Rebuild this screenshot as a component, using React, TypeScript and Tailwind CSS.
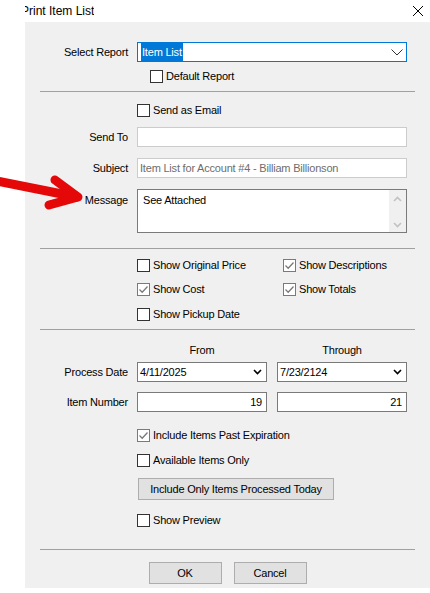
import React from "react";

const font = { fontFamily: '"Liberation Sans", Arial, sans-serif', letterSpacing: "-0.2px" };

function Check({ checked = false }: { checked?: boolean }) {
  return (
    <span
      className={`flex h-[13px] w-[13px] shrink-0 items-center justify-center border bg-white ${
        checked ? "border-[#7a7a7a]" : "border-[#333333]"
      }`}
    >
      {checked && (
        <svg width="11" height="11" viewBox="0 0 11 11">
          <path d="M1.5 5.5 L4.2 8.2 L9.5 2.5" fill="none" stroke="#7a7a7a" strokeWidth="1.3" />
        </svg>
      )}
    </span>
  );
}

function CheckRow({ label, checked }: { label: string; checked?: boolean }) {
  return (
    <div className="flex h-[13px] items-center gap-[3px]">
      <Check checked={checked} />
      <span className="leading-[13px]">{label}</span>
    </div>
  );
}

function Label({ children }: { children: React.ReactNode }) {
  return <div className="w-[88px] shrink-0 text-right">{children}</div>;
}

function Row({
  label,
  children,
  className = "",
}: {
  label?: string;
  children: React.ReactNode;
  className?: string;
}) {
  return (
    <div className={`flex items-center gap-[9px] ${className}`}>
      <Label>{label}</Label>
      <div className="w-[270px] shrink-0">{children}</div>
    </div>
  );
}

function Separator({ className = "" }: { className?: string }) {
  return <div className={`h-px bg-[#a0a0a0] ${className}`} />;
}

function SmallChevron() {
  return (
    <svg width="9" height="6" viewBox="0 0 9 6">
      <path d="M1 1 L4.5 4.5 L8 1" fill="none" stroke="#000" strokeWidth="1.6" />
    </svg>
  );
}

function DateBox({ value }: { value: string }) {
  return (
    <div className="flex h-[20px] w-[130px] items-center justify-between border border-[#7a7a7a] bg-white pl-[2px] pr-[4px]">
      <span>{value}</span>
      <SmallChevron />
    </div>
  );
}

function NumberBox({ value }: { value: string }) {
  return (
    <div className="flex h-[20px] w-[130px] items-center justify-end border border-[#7a7a7a] bg-white pr-[4px]">
      {value}
    </div>
  );
}

function ScrollArrow({ up }: { up?: boolean }) {
  return (
    <svg width="9" height="6" viewBox="0 0 9 6">
      <path
        d={up ? "M1 5 L4.5 1.5 L8 5" : "M1 1 L4.5 4.5 L8 1"}
        fill="none"
        stroke="#c2c2c2"
        strokeWidth="1.6"
      />
    </svg>
  );
}

export default function App() {
  return (
    <div className="relative h-[593px] w-[430px] overflow-hidden bg-white text-[11px] text-black" style={font}>
      {/* title bar */}
      <div className="flex h-[22px] items-center justify-between">
        <div className="ml-[25px] overflow-hidden">
          <span className="-ml-[4px] block whitespace-nowrap text-[12px] tracking-normal">Print Item List</span>
        </div>
        <svg width="12" height="12" viewBox="0 0 12 12" className="mr-[6px]">
          <path d="M1 1 L11 11 M11 1 L1 11" stroke="#000" strokeWidth="1" />
        </svg>
      </div>

      {/* dialog body */}
      <div className="ml-[25px] h-[566px] bg-[#f0f0f0] px-[15px] pt-[20px]">
        <Row label="Select Report">
          <div className="flex h-[20px] items-center justify-between border border-[#0078d7] bg-white pl-[3px] pr-[3px]">
            <span className="flex h-[18px] items-center bg-[#0078d7] px-px text-white">Item List</span>
            <svg width="12" height="7" viewBox="0 0 12 7">
              <path d="M0.5 0.5 L6 6 L11.5 0.5" fill="none" stroke="#333" strokeWidth="1" />
            </svg>
          </div>
        </Row>
        <Row className="mt-[8px]">
          <div className="pl-[13px]">
            <CheckRow label="Default Report" />
          </div>
        </Row>

        <Separator className="mt-[8px]" />

        <Row className="mt-[12px]">
          <CheckRow label="Send as Email" />
        </Row>
        <Row label="Send To" className="mt-[10px]">
          <div className="h-[20px] border border-[#cccccc] bg-white" />
        </Row>
        <Row label="Subject" className="mt-[11px]">
          <div className="flex h-[20px] items-center border border-[#cccccc] bg-white pl-[2px] text-[#6d6d6d]">
            Item List for Account #4 - Billiam Billionson
          </div>
        </Row>
        <div className="mt-[11px] flex gap-[9px]">
          <div className="w-[88px] shrink-0 pt-[3px] text-right">Message</div>
          <div className="flex h-[44px] w-[270px] shrink-0 border border-[#7a7a7a] bg-white">
            <div className="flex-1 pl-[5px] pt-[2px]">See Attached</div>
            <div className="flex w-[17px] flex-col items-center justify-between bg-[#f0f0f0] pb-[4px] pt-[6px]">
              <ScrollArrow up />
              <ScrollArrow />
            </div>
          </div>
        </div>

        <Separator className="mt-[15px]" />

        <Row className="mt-[10px]">
          <div className="grid grid-cols-[146px_1fr] gap-y-[11px]">
            <CheckRow label="Show Original Price" />
            <CheckRow label="Show Descriptions" checked />
            <CheckRow label="Show Cost" checked />
            <CheckRow label="Show Totals" checked />
            <div className="mt-px">
              <CheckRow label="Show Pickup Date" />
            </div>
          </div>
        </Row>

        <Separator className="mt-[8px]" />

        <Row className="mt-[14px]">
          <div className="flex gap-[10px] leading-[13px]">
            <div className="w-[130px] text-center">From</div>
            <div className="w-[130px] text-center">Through</div>
          </div>
        </Row>
        <Row label="Process Date" className="mt-[5px]">
          <div className="flex gap-[10px]">
            <DateBox value="4/11/2025" />
            <DateBox value="7/23/2124" />
          </div>
        </Row>
        <Row label="Item Number" className="mt-[10px]">
          <div className="flex gap-[10px]">
            <NumberBox value="19" />
            <NumberBox value="21" />
          </div>
        </Row>
        <Row className="mt-[17px]">
          <CheckRow label="Include Items Past Expiration" checked />
        </Row>
        <Row className="mt-[12px]">
          <CheckRow label="Available Items Only" />
        </Row>
        <Row className="mt-[11px]">
          <button className="ml-px flex h-[22px] w-[196px] items-center justify-center border border-[#adadad] bg-[#e1e1e1]">
            Include Only Items Processed Today
          </button>
        </Row>
        <Row className="mt-[14px]">
          <CheckRow label="Show Preview" />
        </Row>

        <Separator className="mt-[22px]" />

        <div className="mt-[12px] flex justify-center gap-[12px]">
          <button className="h-[22px] w-[73px] border border-[#adadad] bg-[#e1e1e1]">OK</button>
          <button className="h-[22px] w-[73px] border border-[#adadad] bg-[#e1e1e1]">Cancel</button>
        </div>
      </div>

      {/* red pointer arrow */}
      <svg
        className="pointer-events-none absolute left-0 top-[168px]"
        width="95"
        height="46"
        viewBox="0 0 95 46"
      >
        <g fill="none" stroke="#e50808" strokeWidth="9" strokeLinecap="round" strokeLinejoin="round">
          <path d="M-8 12 L77 29" />
          <path d="M55 12 L78 29 L49 37" />
        </g>
      </svg>
    </div>
  );
}
